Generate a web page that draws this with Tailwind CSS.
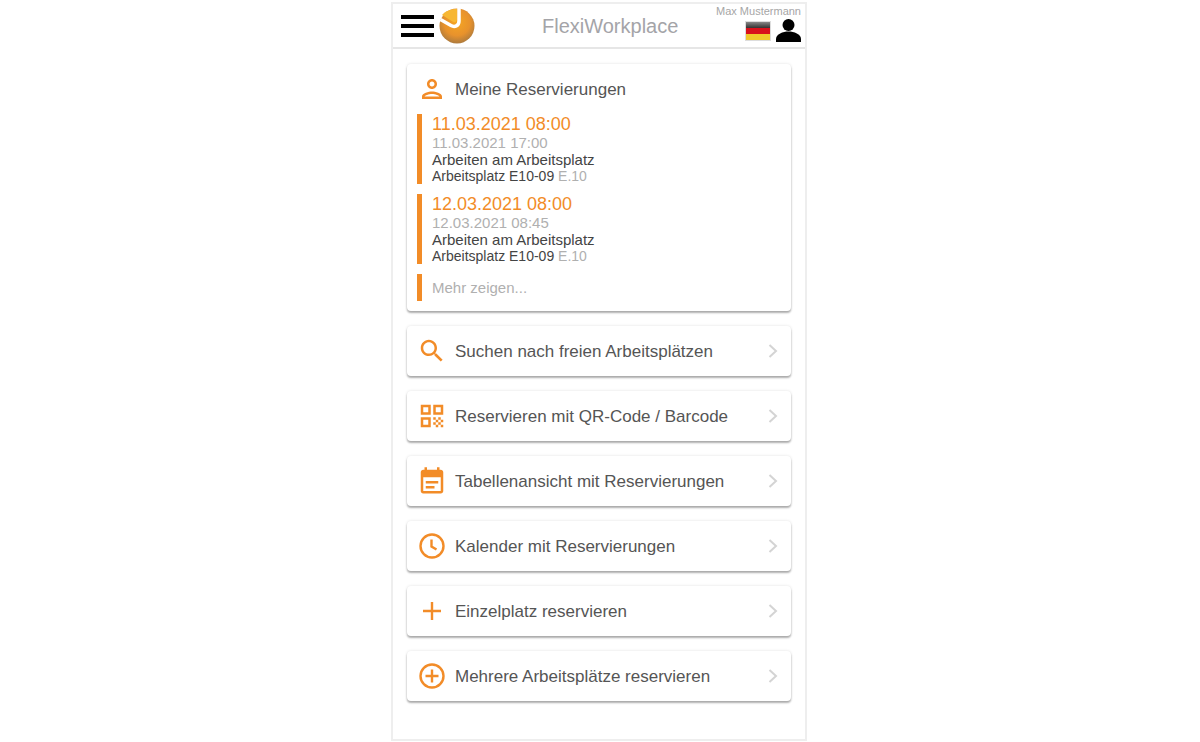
<!DOCTYPE html>
<html lang="de">
<head>
    <meta charset="UTF-8">
    <title>FlexiWorkplace</title>
    <script src="https://cdn.jsdelivr.net/npm/@tailwindcss/browser@4"></script>
</head>
<body class="bg-white font-['Liberation_Sans',Arial,sans-serif] overflow-hidden">
    <div class="w-[416px] h-[739px] mt-[2px] ml-[391px] border-2 border-[#eeeeee] bg-white">
        <!-- Header -->
        <header class="h-[45px] border-b-2 border-[#e6e6e6] flex items-center">
            <div class="ml-[8px] w-[33px] flex flex-col gap-[5px]">
                <div class="h-[4px] bg-black"></div>
                <div class="h-[4px] bg-black"></div>
                <div class="h-[4px] bg-black"></div>
            </div>
            <svg class="ml-[5px] w-[36px] h-[36px]" viewBox="0 0 36 36">
                <defs>
                    <radialGradient id="ball" cx="0.5" cy="0.4" r="0.62">
                        <stop offset="0" stop-color="#f5a623"/>
                        <stop offset="0.6" stop-color="#e8922c"/>
                        <stop offset="1" stop-color="#a9793f"/>
                    </radialGradient>
                </defs>
                <circle cx="18" cy="18" r="17.5" fill="url(#ball)"/>
                <path d="M3 7 C6 3.5 11 1 18 1 L18 11 C18 14 16 15 13.5 13.5 Z" fill="#f7b733"/>
                <path d="M20 0 V13 C20 18 15.5 19.5 12 17.5 L1.5 11.5" fill="none" stroke="#ffffff" stroke-width="3.5"/>
            </svg>
            <div class="ml-[67px] text-[20px] leading-[24px] text-[#a4a4a8]">FlexiWorkplace</div>
            <div class="ml-auto mr-[4px] flex flex-col items-end self-start">
                <div class="text-[11px] leading-[11px] mt-[2px] text-[#a6a6a6]">Max Mustermann</div>
                <div class="flex items-center gap-[5px] mt-[2px]">
                    <div class="w-[26px] h-[20px] border border-[#dddddd] flex flex-col">
                        <div class="flex-1 bg-gradient-to-b from-[#888888] to-[#333333]"></div>
                        <div class="flex-1 bg-[#d8101c]"></div>
                        <div class="flex-1 bg-[#f0c92c]"></div>
                    </div>
                    <svg class="w-[25px] h-[23px] text-black" viewBox="0 0 25 23" fill="currentColor">
                        <circle cx="12.5" cy="6" r="6"/>
                        <path d="M0 23 V20 C0 15 7 12.5 12.5 12.5 C18 12.5 25 15 25 20 V23 Z"/>
                    </svg>
                </div>
            </div>
        </header>

        <!-- Main -->
        <main class="px-[14px] pt-[15px] flex flex-col gap-[15px]">
            <section class="bg-white rounded-[4px] h-[247px] shadow-[0_2px_2px_rgba(0,0,0,0.3),0_0_3px_rgba(0,0,0,0.12)]">
                <div class="h-[50px] flex items-center pl-[10px]">
                    <svg class="w-[30px] h-[30px] text-[#f28c28]" viewBox="0 0 24 24" fill="currentColor">
                        <path d="M12 6c1.1 0 2 .9 2 2s-.9 2-2 2-2-.9-2-2 .9-2 2-2m0 10c2.7 0 5.8 1.29 6 2H6c.23-.72 3.31-2 6-2M12 4C9.79 4 8 5.79 8 8s1.79 4 4 4 4-1.79 4-4-1.79-4-4-4zm0 10c-2.67 0-8 1.34-8 4v2h16v-2c0-2.66-5.33-4-8-4z"/>
                    </svg>
                    <span class="ml-[8px] mt-[1px] text-[17px] text-[#555555]">Meine Reservierungen</span>
                </div>
                <div class="pl-[10px] flex flex-col gap-[10px]">
                    <div class="h-[70px] border-l-[5px] border-[#f28c28] pl-[10px]">
                        <div class="text-[18px] leading-[20px] text-[#f28c28]">11.03.2021 08:00</div>
                        <div class="text-[15px] leading-[18px] text-[#b0b0b0]">11.03.2021 17:00</div>
                        <div class="text-[15px] leading-[16px] text-[#444444]">Arbeiten am Arbeitsplatz</div>
                        <div class="text-[14px] leading-[16px] text-[#444444]">Arbeitsplatz E10-09 <span class="text-[#b0b0b0]">E.10</span></div>
                    </div>
                    <div class="h-[70px] border-l-[5px] border-[#f28c28] pl-[10px]">
                        <div class="text-[18px] leading-[20px] text-[#f28c28]">12.03.2021 08:00</div>
                        <div class="text-[15px] leading-[18px] text-[#b0b0b0]">12.03.2021 08:45</div>
                        <div class="text-[15px] leading-[16px] text-[#444444]">Arbeiten am Arbeitsplatz</div>
                        <div class="text-[14px] leading-[16px] text-[#444444]">Arbeitsplatz E10-09 <span class="text-[#b0b0b0]">E.10</span></div>
                    </div>
                    <div class="h-[27px] border-l-[5px] border-[#f28c28] pl-[10px] pt-[2px] flex items-center text-[15px] text-[#b0b0b0]">Mehr zeigen...</div>
                </div>
            </section>

            <a class="h-[50px] bg-white rounded-[4px] shadow-[0_2px_2px_rgba(0,0,0,0.3),0_0_3px_rgba(0,0,0,0.12)] flex items-center pl-[10px] pr-[12px]">
                <svg class="w-[30px] h-[30px] text-[#f28c28]" viewBox="0 0 24 24" fill="currentColor">
                    <path d="M15.5 14h-.79l-.28-.27C15.41 12.59 16 11.11 16 9.5 16 5.91 13.09 3 9.5 3S3 5.91 3 9.5 5.91 16 9.5 16c1.61 0 3.09-.59 4.23-1.57l.27.28v.79l5 4.99L20.49 19l-4.99-5zm-6 0C7.01 14 5 11.99 5 9.5S7.01 5 9.5 5 14 7.01 14 9.5 11.99 14 9.5 14z"/>
                </svg>
                <span class="ml-[8px] mt-[1px] text-[17px] text-[#555555]">Suchen nach freien Arbeitsplätzen</span>
                <svg class="ml-auto w-[12px] h-[16px] text-[#d4d4d4]" viewBox="0 0 12 16" fill="none" stroke="currentColor" stroke-width="2"><path d="M2.5 2 L9 8 L2.5 14"/></svg>
            </a>

            <a class="h-[50px] bg-white rounded-[4px] shadow-[0_2px_2px_rgba(0,0,0,0.3),0_0_3px_rgba(0,0,0,0.12)] flex items-center pl-[10px] pr-[12px]">
                <svg class="w-[30px] h-[30px] text-[#f28c28]" viewBox="0 0 24 24" fill="currentColor">
                    <path d="M3 11h8V3H3v8zm2-6h4v4H5V5zM3 21h8v-8H3v8zm2-6h4v4H5v-4zM13 3v8h8V3h-8zm6 6h-4V5h4v4zM13 13h2v2h-2zM15 15h2v2h-2zM13 17h2v2h-2zM15 19h2v2h-2zM17 17h2v2h-2zM17 13h2v2h-2zM19 15h2v2h-2zM19 19h2v2h-2z"/>
                </svg>
                <span class="ml-[8px] mt-[1px] text-[17px] text-[#555555]">Reservieren mit QR-Code / Barcode</span>
                <svg class="ml-auto w-[12px] h-[16px] text-[#d4d4d4]" viewBox="0 0 12 16" fill="none" stroke="currentColor" stroke-width="2"><path d="M2.5 2 L9 8 L2.5 14"/></svg>
            </a>

            <a class="h-[50px] bg-white rounded-[4px] shadow-[0_2px_2px_rgba(0,0,0,0.3),0_0_3px_rgba(0,0,0,0.12)] flex items-center pl-[10px] pr-[12px]">
                <svg class="w-[30px] h-[30px] text-[#f28c28]" viewBox="0 0 24 24" fill="currentColor">
                    <path d="M17 12H7v2h10v-2zm-3 4H7v2h7v-2zM19 3h-1V1h-2v2H8V1H6v2H5c-1.1 0-2 .9-2 2v15c0 1.1.9 2 2 2h14c1.1 0 2-.9 2-2V5c0-1.1-.9-2-2-2zm0 17H5V9h14v11z"/>
                </svg>
                <span class="ml-[8px] mt-[1px] text-[17px] text-[#555555]">Tabellenansicht mit Reservierungen</span>
                <svg class="ml-auto w-[12px] h-[16px] text-[#d4d4d4]" viewBox="0 0 12 16" fill="none" stroke="currentColor" stroke-width="2"><path d="M2.5 2 L9 8 L2.5 14"/></svg>
            </a>

            <a class="h-[50px] bg-white rounded-[4px] shadow-[0_2px_2px_rgba(0,0,0,0.3),0_0_3px_rgba(0,0,0,0.12)] flex items-center pl-[10px] pr-[12px]">
                <svg class="w-[26px] h-[26px] mx-[2px] text-[#f28c28]" viewBox="0 0 26 26" fill="none" stroke="currentColor" stroke-width="2.4">
                    <circle cx="13" cy="13" r="11.5"/>
                    <path d="M12.5 6.5 V13.5 L17.5 16.5"/>
                </svg>
                <span class="ml-[8px] mt-[1px] text-[17px] text-[#555555]">Kalender mit Reservierungen</span>
                <svg class="ml-auto w-[12px] h-[16px] text-[#d4d4d4]" viewBox="0 0 12 16" fill="none" stroke="currentColor" stroke-width="2"><path d="M2.5 2 L9 8 L2.5 14"/></svg>
            </a>

            <a class="h-[50px] bg-white rounded-[4px] shadow-[0_2px_2px_rgba(0,0,0,0.3),0_0_3px_rgba(0,0,0,0.12)] flex items-center pl-[10px] pr-[12px]">
                <svg class="w-[26px] h-[26px] mx-[2px] text-[#f28c28]" viewBox="0 0 26 26" fill="none" stroke="currentColor" stroke-width="2.4">
                    <path d="M13 4 V22 M4 13 H22"/>
                </svg>
                <span class="ml-[8px] mt-[1px] text-[17px] text-[#555555]">Einzelplatz reservieren</span>
                <svg class="ml-auto w-[12px] h-[16px] text-[#d4d4d4]" viewBox="0 0 12 16" fill="none" stroke="currentColor" stroke-width="2"><path d="M2.5 2 L9 8 L2.5 14"/></svg>
            </a>

            <a class="h-[50px] bg-white rounded-[4px] shadow-[0_2px_2px_rgba(0,0,0,0.3),0_0_3px_rgba(0,0,0,0.12)] flex items-center pl-[10px] pr-[12px]">
                <svg class="w-[26px] h-[26px] mx-[2px] text-[#f28c28]" viewBox="0 0 26 26" fill="none" stroke="currentColor" stroke-width="2.4">
                    <circle cx="13" cy="13" r="11.5"/>
                    <path d="M13 6.5 V19.5 M6.5 13 H19.5"/>
                </svg>
                <span class="ml-[8px] mt-[1px] text-[17px] text-[#555555]">Mehrere Arbeitsplätze reservieren</span>
                <svg class="ml-auto w-[12px] h-[16px] text-[#d4d4d4]" viewBox="0 0 12 16" fill="none" stroke="currentColor" stroke-width="2"><path d="M2.5 2 L9 8 L2.5 14"/></svg>
            </a>
        </main>
    </div>
</body>
</html>
